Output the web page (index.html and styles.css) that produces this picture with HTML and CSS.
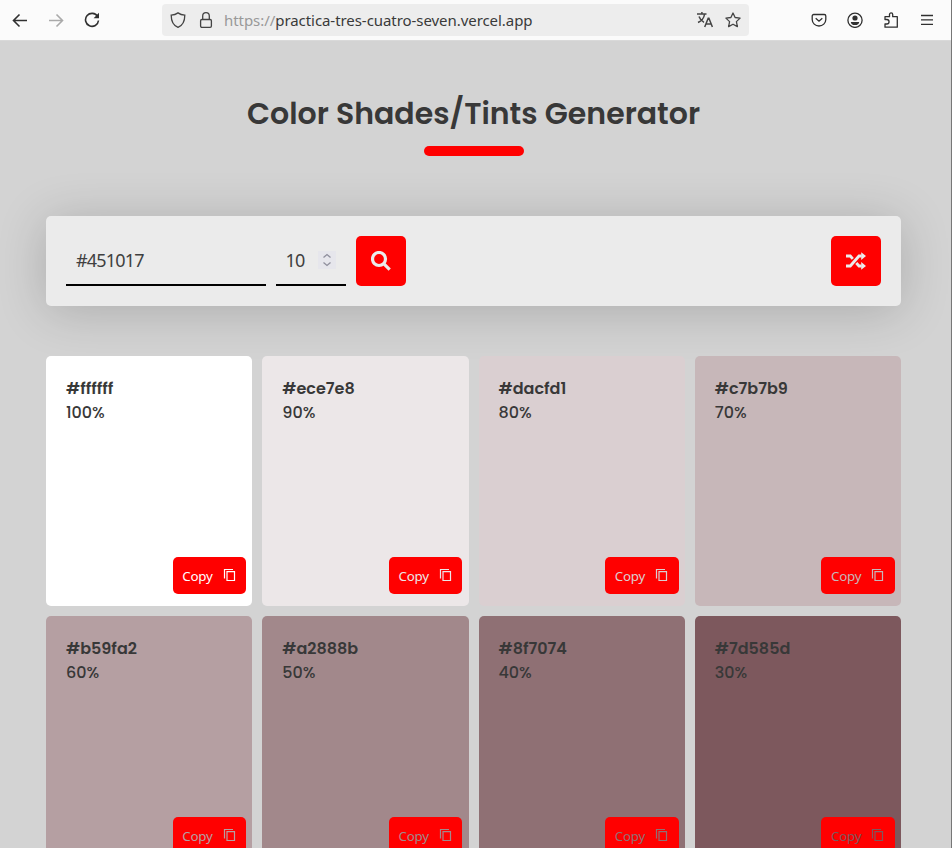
FILE: index.html
```html
<!DOCTYPE html>
<html lang="en">
<head>
<meta charset="utf-8">
<title>Color Shades/Tints Generator</title>
<link rel="stylesheet" href="styles.css">
</head>
<body>
<div class="window">
<header class="toolbar">
  <div class="nav">
    <svg width="16" height="16" viewBox="0 0 16 16"><path d="M15 8.500H1.500M7.500 2.500 1.500 8.500l6 6"/></svg>
    <svg class="disabled" width="16" height="16" viewBox="0 0 16 16"><path d="M1 8.500h13.500M8.500 2.500l6 6-6 6"/></svg>
    <svg width="16" height="16" viewBox="0 0 16 16"><path d="M13.600 4.500A6.500 6.500 0 1 0 14.500 8.500"/><path class="solid" d="M15 .8v5.400H9.600z"/></svg>
  </div>
  <div class="address">
    <svg width="16" height="16" viewBox="0 0 16 16"><path d="M8 .9C6 2.300 3.700 3 1.200 3.200 1.200 9 3 13.300 8 15.300c5-2 6.800-6.300 6.800-12.100C12.300 3 10 2.300 8 .9z"/></svg>
    <svg width="16" height="16" viewBox="0 0 16 16"><rect x="2.600" y="7.500" width="10.800" height="7.800" rx="1.300"/><path d="M4.700 7.500V4a3.300 3.300 0 0 1 6.600 0v3.500"/></svg>
    <div class="url"><span>https://</span>practica-tres-cuatro-seven.vercel.app</div>
    <svg class="translate" width="16" height="16" viewBox="0 0 16 16"><path d="M0 2h9.500M4.900 0v2M2 4.500c1 3 3 4.800 5 5.800M7.600 2C7 6 4.500 9 1 10.500M7.700 15l3.500-8.700h.7l3.500 8.700M9 12h5.200"/></svg>
    <svg width="16" height="16" viewBox="0 0 16 16"><path stroke-linejoin="round" d="m8 1 2.100 4.500 5 .6-3.700 3.500 1 5L8 12.200l-4.400 2.400 1-5L.9 6.100l5-.6z"/></svg>
  </div>
  <div class="tools">
    <svg width="16" height="16" viewBox="0 0 16 16"><path d="M2.700 2.500h10.600c.8 0 1.500.6 1.500 1.500V7.500a6.800 6.500 0 0 1-13.600 0V4c0-.9.700-1.500 1.500-1.500zM4.700 6.200 8 9.200l3.300-3"/></svg>
    <svg width="16" height="16" viewBox="0 0 16 16"><circle cx="8" cy="8.300" r="7.100"/><circle class="solid" cx="8" cy="6" r="2.600"/><path class="solid" d="M3.800 9.900h8.400c0 2-1.700 3.200-4.200 3.200s-4.200-1.200-4.200-3.200z"/></svg>
    <svg width="16" height="16" viewBox="0 0 16 16"><path stroke-linejoin="round" d="M2 7.500V4.700h4.500V2.500a1.600 1.600 0 0 1 3.200 0v2.200h4.600v10.500H2V12h1.800a2.200 2.200 0 0 0 0-4.500z"/></svg>
    <svg width="16" height="16" viewBox="0 0 16 16"><path d="M2 3.500h12M2 7.800h12M2 12.300h12"/></svg>
  </div>
</header>
<main>
  <h1>Color Shades/Tints Generator</h1>
  <div class="underline"></div>
  <form class="panel">
    <div class="field hex">#451017</div>
    <div class="field count"><span>10</span>
      <svg width="18" height="18" viewBox="0 0 18 18"><path d="m5.500 6.500 3.500-3 3.500 3M5.500 11.500l3.500 3 3.500-3"/></svg>
    </div>
    <button type="button" class="action" aria-label="Search"><svg width="20" height="20" viewBox="0 0 20 20"><circle cx="8" cy="8" r="6.500"/><path d="m12.700 12.700 6 6"/></svg></button>
    <button type="button" class="action random" aria-label="Random"><svg width="20" height="20" viewBox="0 0 20 20"><path d="M0 5h4.300L6.800 7.900M0 15h4.300L13 5h2.500M10.300 12 13 15h2.500"/><path class="solid" d="M15.200 1.200 20 5l-4.800 3.900zM15.200 11.100 20 15l-4.800 3.800z"/></svg></button>
  </form>
  <section class="grid">
    <article class="card c100"><h2>#ffffff</h2><p>100%</p><button type="button" class="copy">Copy<svg width="14" height="14" viewBox="0 0 14 14"><path d="M1.500 10.500v-9H10M4 3.700h7.500v8.800H4z"/></svg></button></article>
    <article class="card c90"><h2>#ece7e8</h2><p>90%</p><button type="button" class="copy">Copy<svg width="14" height="14" viewBox="0 0 14 14"><path d="M1.500 10.500v-9H10M4 3.700h7.500v8.800H4z"/></svg></button></article>
    <article class="card c80"><h2>#dacfd1</h2><p>80%</p><button type="button" class="copy">Copy<svg width="14" height="14" viewBox="0 0 14 14"><path d="M1.500 10.500v-9H10M4 3.700h7.500v8.800H4z"/></svg></button></article>
    <article class="card c70"><h2>#c7b7b9</h2><p>70%</p><button type="button" class="copy">Copy<svg width="14" height="14" viewBox="0 0 14 14"><path d="M1.500 10.500v-9H10M4 3.700h7.500v8.800H4z"/></svg></button></article>
    <article class="card c60"><h2>#b59fa2</h2><p>60%</p><button type="button" class="copy">Copy<svg width="14" height="14" viewBox="0 0 14 14"><path d="M1.500 10.500v-9H10M4 3.700h7.500v8.800H4z"/></svg></button></article>
    <article class="card c50"><h2>#a2888b</h2><p>50%</p><button type="button" class="copy">Copy<svg width="14" height="14" viewBox="0 0 14 14"><path d="M1.500 10.500v-9H10M4 3.700h7.500v8.800H4z"/></svg></button></article>
    <article class="card c40"><h2>#8f7074</h2><p>40%</p><button type="button" class="copy">Copy<svg width="14" height="14" viewBox="0 0 14 14"><path d="M1.500 10.500v-9H10M4 3.700h7.500v8.800H4z"/></svg></button></article>
    <article class="card c30"><h2>#7d585d</h2><p>30%</p><button type="button" class="copy">Copy<svg width="14" height="14" viewBox="0 0 14 14"><path d="M1.500 10.500v-9H10M4 3.700h7.500v8.800H4z"/></svg></button></article>
  </section>
</main>
</div>
</body>
</html>
```
FILE: styles.css
```css
* { box-sizing: border-box; margin: 0; padding: 0; }
body { height: 848px; overflow: hidden; background: #d3d3d3; color: #383838; font-family: Poppins, Inter, sans-serif; }
.window { height: 848px; overflow: hidden; border-right: 1px solid #777; }
svg { display: block; flex: none; fill: none; stroke: currentColor; stroke-width: 1.3; }
.solid { fill: currentColor; stroke: none; }

.toolbar { display: flex; height: 41px; padding: 4px 15px 0 12px; background: #fbfbfb; border-bottom: 1px solid #d9d9d9; color: #303030; }
.nav { display: flex; flex: none; gap: 20px; width: 150px; padding-top: 8px; }
.nav svg { stroke-width: 1.6; }
.nav .disabled { color: #aaa; }
.address { display: flex; flex: none; align-items: center; width: 587px; height: 32px; padding: 0 8px; border-radius: 4px; background: #ededed; gap: 12px; color: #444; }
.url { flex: 1; margin-left: -2px; font: 15px/32px "Noto Sans", sans-serif; letter-spacing: -0.06px; color: #3a3a3a; white-space: nowrap; }
.url span { color: #999; }
.translate { stroke-width: 1.5; }
.tools { display: flex; gap: 20px; margin-left: 62px; padding-top: 8px; }

main { padding: 50px 50px 0 46px; }
h1 { width: 855px; font-size: 30px; line-height: 45px; font-weight: 600; text-align: center; white-space: nowrap; }
.underline { width: 100px; height: 10px; margin: 10px 0 60px 378px; border-radius: 5px; background: #f00; }
.panel { display: flex; gap: 10px; width: 855px; height: 90px; padding: 20px; border-radius: 5px; background: #ebebeb; box-shadow: 0 5px 50px rgba(0,0,0,.19); }
.field { height: 50px; padding-left: 10px; border-bottom: 2px solid #000; font: 18px/48px "Noto Sans", sans-serif; letter-spacing: -0.8px; color: #404040; }
.hex { width: 200px; }
.count { display: flex; width: 70px; justify-content: space-between; align-items: center; padding: 0 10px 0 9.5px; }
.count svg { color: #8f8f9d; background: #e6e6ec; }
.action { display: flex; align-items: center; justify-content: center; width: 50px; height: 50px; border: 0; border-radius: 5px; background: #f00; color: #ebebeb; }
.action svg { stroke-width: 3.2; }
.random { margin-left: auto; }
.random svg { stroke-width: 2.8; }

.grid { display: grid; grid-template-columns: repeat(4, 1fr); gap: 10px; width: 855px; margin-top: 50px; }
.card { display: flex; flex-direction: column; height: 250px; padding: 21px 6.1px 12px 20px; border-radius: 5px; font-size: 16px; line-height: 24px; }
.card h2 { font-size: 16px; font-weight: 600; }
.card p { font-weight: 500; }
.copy { display: flex; justify-content: space-between; align-items: center; align-self: flex-end; width: 73.45px; height: 37px; margin-top: auto; padding: 0 9.5px 0 9.5px; border: 0; border-radius: 5px; background: #f00; font: 13.330px "Noto Sans", sans-serif; letter-spacing: -0.2px; }
.copy svg { stroke-width: 1.2; margin-top: -2px; }
.c100 { background: #fff; } .c100 .copy { color: #fff; }
.c90 { background: #ece7e8; } .c90 .copy { color: #ece7e8; }
.c80 { background: #dacfd1; } .c80 .copy { color: #dacfd1; }
.c70 { background: #c7b7b9; } .c70 .copy { color: #c7b7b9; }
.c60 { background: #b59fa2; } .c60 .copy { color: #b59fa2; }
.c50 { background: #a2888b; } .c50 .copy { color: #a2888b; }
.c40 { background: #8f7074; } .c40 .copy { color: #8f7074; }
.c30 { background: #7d585d; } .c30 .copy { color: #7d585d; }
```
